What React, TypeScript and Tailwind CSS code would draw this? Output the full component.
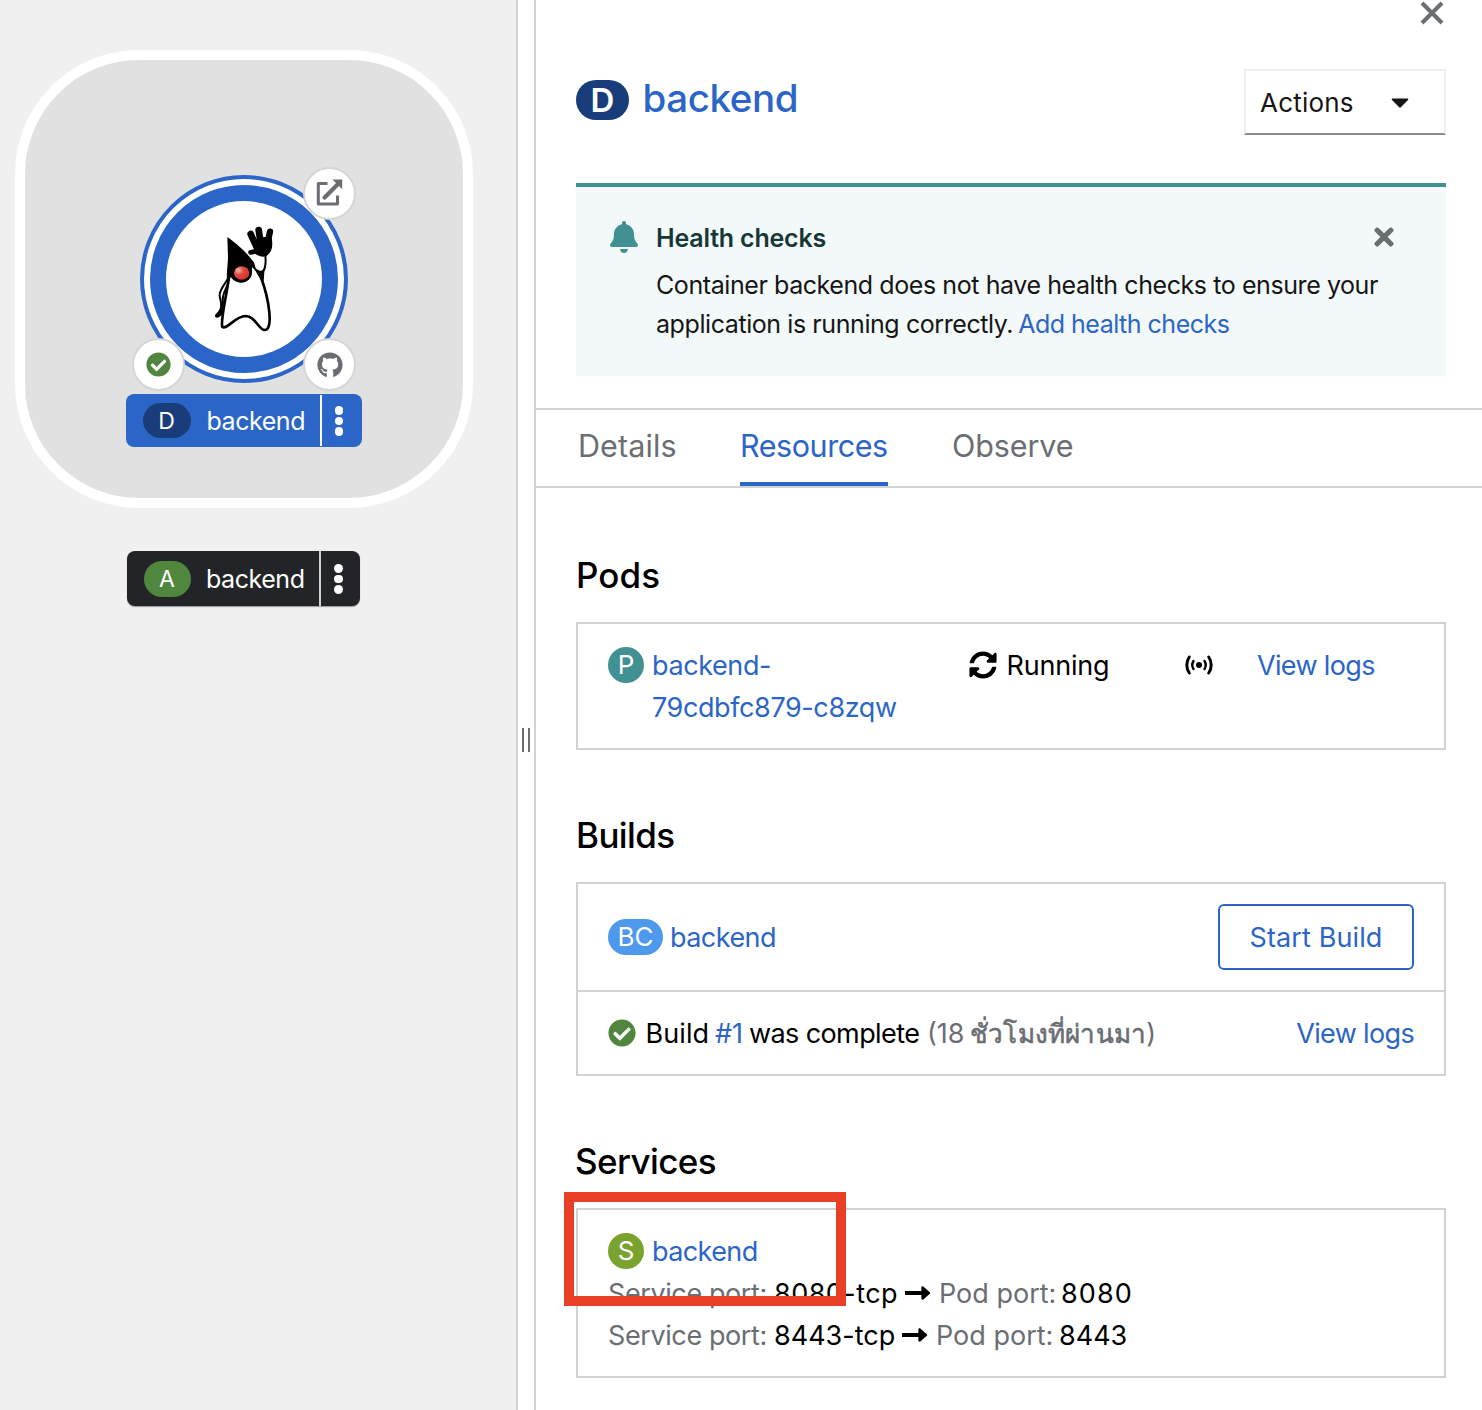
import React from "react";
import { FaBell, FaTimes, FaSyncAlt, FaCheckCircle, FaGithub } from "react-icons/fa";

function Duke() {
  return (
    <svg className="absolute left-[200px] top-[215px]" width="90" height="125" viewBox="0 0 270 375">
      <defs>
        <radialGradient id="nose" cx="0.3" cy="0.3" r="0.75">
          <stop offset="0" stopColor="#f6b9ae" />
          <stop offset="0.45" stopColor="#dc4a42" />
          <stop offset="1" stopColor="#d2352f" />
        </radialGradient>
      </defs>
      <path d="M84 190 C76 208 58 222 59 242 C60 256 66 262 63 276" fill="none" stroke="#000" strokeWidth="6" />
      <path d="M82 225 C74 232 70 246 72 262 L66 300 C58 306 52 311 47 307 C42 301 48 296 54 290 C60 282 60 274 66 264 C62 250 70 228 82 205 Z" fill="#000" />
      <path
        d="M88 180 C82 230 60 318 67 336 C80 346 104 304 137 303 C166 303 176 345 194 345 C222 345 206 250 184 190 L165 152"
        fill="#fff" stroke="#000" strokeWidth="8" strokeLinejoin="round"
      />
      <path d="M82 66 C112 88 146 116 170 154 C182 176 188 190 190 206 C178 190 170 168 156 156 C158 190 140 203 123 203 C108 202 98 194 92 186 L82 200 C78 190 84 140 84 130 Z" fill="#000" />
      <path d="M158 118 C174 128 186 122 190 118 L198 136 C198 152 194 160 184 168 C174 170 166 160 164 150" fill="#fff" />
      <path d="M196 120 C197 134 200 150 190 170 L188 198" fill="none" stroke="#000" strokeWidth="6" />
      <path d="M168 154 C174 172 186 170 193 158 L189 202 C180 190 176 170 168 154 Z" fill="#000" />
      <g stroke="#000" strokeLinecap="round" fill="none">
        <path d="M152 57 L170 96" strokeWidth="20" />
        <path d="M176 45 L182 84" strokeWidth="20" />
        <path d="M210 50 L202 86" strokeWidth="19" />
        <path d="M152 112 L172 108" strokeWidth="15" />
      </g>
      <path d="M160 76 L177 68 L195 66 L215 66 C220 98 214 110 203 120 C192 132 166 120 160 112 L168 98 Z" fill="#000" />
      <ellipse cx="125" cy="174" rx="31" ry="28" fill="#000" />
      <ellipse cx="125" cy="174" rx="23" ry="20" fill="url(#nose)" />
    </svg>
  );
}

function Kebab() {
  return (
    <div className="ml-[13px] flex flex-col items-center justify-center gap-[2px] pt-px">
      <i className="size-[8.5px] rounded-full bg-white" />
      <i className="size-[8.5px] rounded-full bg-white" />
      <i className="size-[8.5px] rounded-full bg-white" />
    </div>
  );
}

function Topology() {
  const decorator = "absolute flex size-[53px] items-center justify-center rounded-full border-2 border-[#d5d5d5] bg-white text-[#6a6e73]";
  return (
    <aside className="relative h-full w-[518px] shrink-0 border-r-2 border-[#d2d2d2] bg-[#f0f0f0]">
      <div className="absolute left-[15px] top-[50px] size-[458px] rounded-[124px] border-10 border-white bg-[#e1e1e1]" />
      <div className="absolute left-[140px] top-[175px] size-[208px] rounded-full border-4 border-[#2b65c7] bg-white p-[6px]">
        <div className="size-full rounded-full border-16 border-[#2b65c7]" />
      </div>
      <Duke />
      <div className={`${decorator} left-[303px] top-[167px]`}>
        <svg width="28" height="28" viewBox="0 0 28 28" fill="none" stroke="currentColor" className="-translate-x-px -translate-y-px">
          <path d="M12.5 4.5H3.3V25H22.5V16.5" strokeWidth="3" strokeLinejoin="round" />
          <path d="M9.6 18.4L22.5 5.5" strokeWidth="4.2" strokeLinecap="round" />
          <path d="M17.5 .5H27.2V10.2Z" fill="currentColor" stroke="none" />
        </svg>
      </div>
      <div className={`${decorator} left-[131.5px] top-[338px]`}>
        <FaCheckCircle className="size-[25px] text-[#51863f]" />
      </div>
      <div className={`${decorator} left-[303px] top-[338px]`}>
        <FaGithub className="size-[26px]" />
      </div>
      <div className="absolute left-[125.5px] top-[394px] flex h-[53px] w-[236.5px] items-center rounded-lg bg-[#2b65c7] text-[25px] text-white">
        <span className="ml-[17px] flex h-[35px] w-[48px] items-center justify-center rounded-full bg-[#193d7a] text-[23px]">D</span>
        <span className="ml-[16px] w-[113px] tracking-[-0.45px]">backend</span>
        <span className="h-[51px] w-[2px] bg-white" />
        <Kebab />
      </div>
      <div className="absolute left-[127px] top-[551px] flex h-[55px] w-[233px] items-center rounded-lg bg-[#232428] text-[25px] text-white shadow-[0_1px_1px_#999]">
        <span className="ml-[16.5px] flex h-[36px] w-[47px] items-center justify-center rounded-full bg-[#51863f] text-[23px]">A</span>
        <span className="ml-[15.5px] w-[113px] tracking-[-0.45px]">backend</span>
        <span className="h-full w-[2px] bg-[#d2d2d2]" />
        <Kebab />
      </div>
    </aside>
  );
}

type Port = { port: string; protoClass: string; podClass: string; portClass: string };

const ports: Port[] = [
  { port: "8080", protoClass: "w-[131px] tracking-[0.45px]", podClass: "w-[122px]", portClass: "tracking-[1.1px]" },
  { port: "8443", protoClass: "w-[128px]", podClass: "w-[123px]", portClass: "" },
];

function PortRow({ port, protoClass, podClass, portClass }: Port) {
  return (
    <div className="flex h-[42px] items-center whitespace-nowrap">
      <span className="w-[166px] translate-y-px tracking-[-0.4px] text-[#6a6e73]">Service port:</span>
      <span className={`${protoClass} translate-y-px`}>{port}-tcp</span>
      <svg width="26" height="14" viewBox="0 0 27 14" className="mr-[8px] shrink-0">
        <path d="M0 4.8H17V1.2C17 0 18.4 -.4 19.3 .4L25.8 6.2C26.3 6.7 26.3 7.3 25.8 7.8L19.3 13.6C18.4 14.4 17 14 17 12.8V9.2H0Z" />
      </svg>
      <span className={`${podClass} translate-y-px text-[#6a6e73]`}>Pod port:</span>
      <span className={`${portClass} translate-y-px`}>{port}</span>
    </div>
  );
}

const heading = "h-[46px] text-[35px] font-medium leading-[46px]";
const box = "mt-6 border-2 border-[#d2d2d2]";
const badge = "flex size-[36px] shrink-0 items-center justify-center rounded-full text-[26px] text-white";

export default function App() {
  return (
    <div className="flex h-[1410px] w-[1482px] overflow-hidden bg-white font-['Inter','Noto_Sans',sans-serif] text-[27px] leading-[42px] text-black">
      <Topology />
      <div className="flex w-[18px] shrink-0 items-center justify-center gap-1 border-r-2 border-[#d2d2d2] pt-[70px]">
        <i className="h-6 w-[2px] bg-[#6a6e73]" />
        <i className="h-6 w-[2px] bg-[#6a6e73]" />
      </div>
      <main className="min-w-0 flex-1">
        <div className="flex h-[69px] justify-end pr-[38px]">
          <svg width="24" height="26" viewBox="0 0 24 26" stroke="#6a6e73" strokeWidth="4">
            <path d="M2 3L22 23M22 3L2 23" />
          </svg>
        </div>
        <header className="flex h-[114px] items-start pl-10 pr-9">
          <span className="mt-[11px] flex h-[40px] w-[53px] items-center justify-center rounded-full bg-[#193d7a] text-[33px] font-semibold text-white">D</span>
          <h1 className="ml-[13.5px] mt-[5px] flex-1 text-[38.5px] font-medium leading-[48px] tracking-[-0.4px] text-[#2b65c7]">backend</h1>
          <button className="flex h-[66px] w-[202px] items-center border-2 border-[#efefef] border-b-[#8a8d90] pl-[14px] text-[26px] tracking-[0.2px] text-[#151515]">
            <span className="w-[131px] translate-y-px text-left">Actions</span>
            <svg width="18" height="10" viewBox="0 0 18 10" fill="#151515" className="translate-y-px">
              <path d="M1.6 .5H16.4C17.4 .5 17.6 1.4 17 2L10 9C9.4 9.7 8.6 9.7 8 9L1 2C.4 1.4 .6 .5 1.6 .5Z" />
            </svg>
          </button>
        </header>
        <section className="ml-10 mr-9 flex h-[193px] border-t-4 border-[#419192] bg-[#f3f9f9] px-8 pt-8 text-[25px] leading-[39px] text-[#151515]">
          <FaBell className="ml-[2px] mt-[2px] h-[32px] w-[28px] shrink-0 text-[#419192]" />
          <div className="ml-[18px] min-w-0 flex-1 whitespace-nowrap">
            <h2 className="mb-2 font-semibold tracking-[-0.2px] text-[#173737]">Health checks</h2>
            <p className="tracking-[-0.42px]">
              Container backend does not have health checks to ensure your
              <br />
              application is running correctly.<a className="pl-[5px] tracking-[-0.5px] text-[#2b65c7]">Add health checks</a>
            </p>
          </div>
          <FaTimes className="mr-[16px] mt-[4px] size-[28px] shrink-0 text-[#6a6e73]" />
        </section>
        <nav className="mt-8 flex h-[80px] border-y-2 border-[#d2d2d2] pl-[42px] text-[30.5px] leading-[72px] text-[#6a6e73]">
          <a className="mr-[62px] w-[100px] tracking-[0.1px]">Details</a>
          <a className="mr-[64px] w-[148px] border-b-4 border-[#2b65c7] tracking-[-0.45px] text-[#2b65c7]">Resources</a>
          <a className="tracking-[-0.1px]">Observe</a>
        </nav>
        <div className="pl-10 pr-9 pt-16">
          <h2 className={`${heading} tracking-[0.1px]`}>Pods</h2>
          <div className={`${box} flex h-[128px] items-start whitespace-nowrap px-[30px] py-5`}>
            <span className={`${badge} mt-[3px] bg-[#419192]`}>P</span>
            <a className="ml-[8px] mt-px w-[317px] shrink-0 tracking-[-0.4px] text-[#2b65c7]">backend-<br />79cdbfc879-c8zqw</a>
            <FaSyncAlt className="mt-[7px] size-[28px] shrink-0" />
            <span className="ml-[9.5px] mt-px w-[178.5px] shrink-0 tracking-[-0.2px]">Running</span>
            <svg width="28" height="22" viewBox="0 0 28 22" className="mt-[10px] shrink-0" fill="none" stroke="#000" strokeWidth="3" strokeLinecap="round">
              <circle cx="14" cy="11" r="3" fill="#000" stroke="none" />
              <path d="M8.5 7C7 9.4 7 12.6 8.5 15M19.5 7C21 9.4 21 12.6 19.5 15" strokeWidth="2.4" />
              <path d="M4.3 3C1 7.6 1 14.4 4.3 19M23.7 3C27 7.6 27 14.4 23.7 19" />
            </svg>
            <a className="ml-[44px] mt-px tracking-[-0.65px] text-[#2b65c7]">View logs</a>
          </div>
          <h2 className={`${heading} mt-[62px] tracking-[-0.6px]`}>Builds</h2>
          <div className={box}>
            <div className="flex h-[108px] items-center border-b-2 border-[#d2d2d2] px-[30px]">
              <span className="flex h-[36px] w-[55px] items-center justify-center rounded-full bg-[#4f99ed] text-[26px] text-white">BC</span>
              <a className="ml-[7px] flex-1 translate-y-px tracking-[-0.55px] text-[#2b65c7]">backend</a>
              <button className="h-[66px] w-[196px] rounded-[6px] border-2 border-[#2b65c7] pt-[2px] tracking-[0.1px] text-[#2b65c7]">Start Build</button>
            </div>
            <div className="flex h-[82px] items-center whitespace-nowrap px-[30px]">
              <FaCheckCircle className="size-[28px] text-[#51863f]" />
              <span className="ml-[9.5px] w-[69.5px] translate-y-px tracking-[0.1px]">Build</span>
              <a className="w-[34px] translate-y-px text-[#2b65c7]">#1</a>
              <span className="w-[178px] translate-y-px tracking-[-0.6px]">was complete</span>
              <span className="flex flex-1 translate-y-px text-[#6a6e73]">
                <span className="w-[43px]">(18</span>
                <span className="text-[26px] tracking-[0.2px] [-webkit-text-stroke:0.6px_#6a6e73]">ชั่วโมงที่ผ่านมา</span>
                <span>)</span>
              </span>
              <a className="translate-y-px tracking-[-0.65px] text-[#2b65c7]">View logs</a>
            </div>
          </div>
          <h2 className={`${heading} -ml-px mt-[62px] tracking-[-0.6px]`}>Services</h2>
          <div className={`${box} relative h-[170px] px-[30px] py-5`}>
            <div className="flex h-[42px] items-center">
              <span className={`${badge} bg-[#79a32e]`}>S</span>
              <a className="ml-[8px] translate-y-px tracking-[-0.6px] text-[#2b65c7]">backend</a>
            </div>
            {ports.map((p) => (
              <PortRow key={p.port} {...p} />
            ))}
            <div className="absolute -left-[14px] -top-[18px] h-[114px] w-[282px] border-10 border-[#e93f25]" />
          </div>
        </div>
      </main>
    </div>
  );
}
